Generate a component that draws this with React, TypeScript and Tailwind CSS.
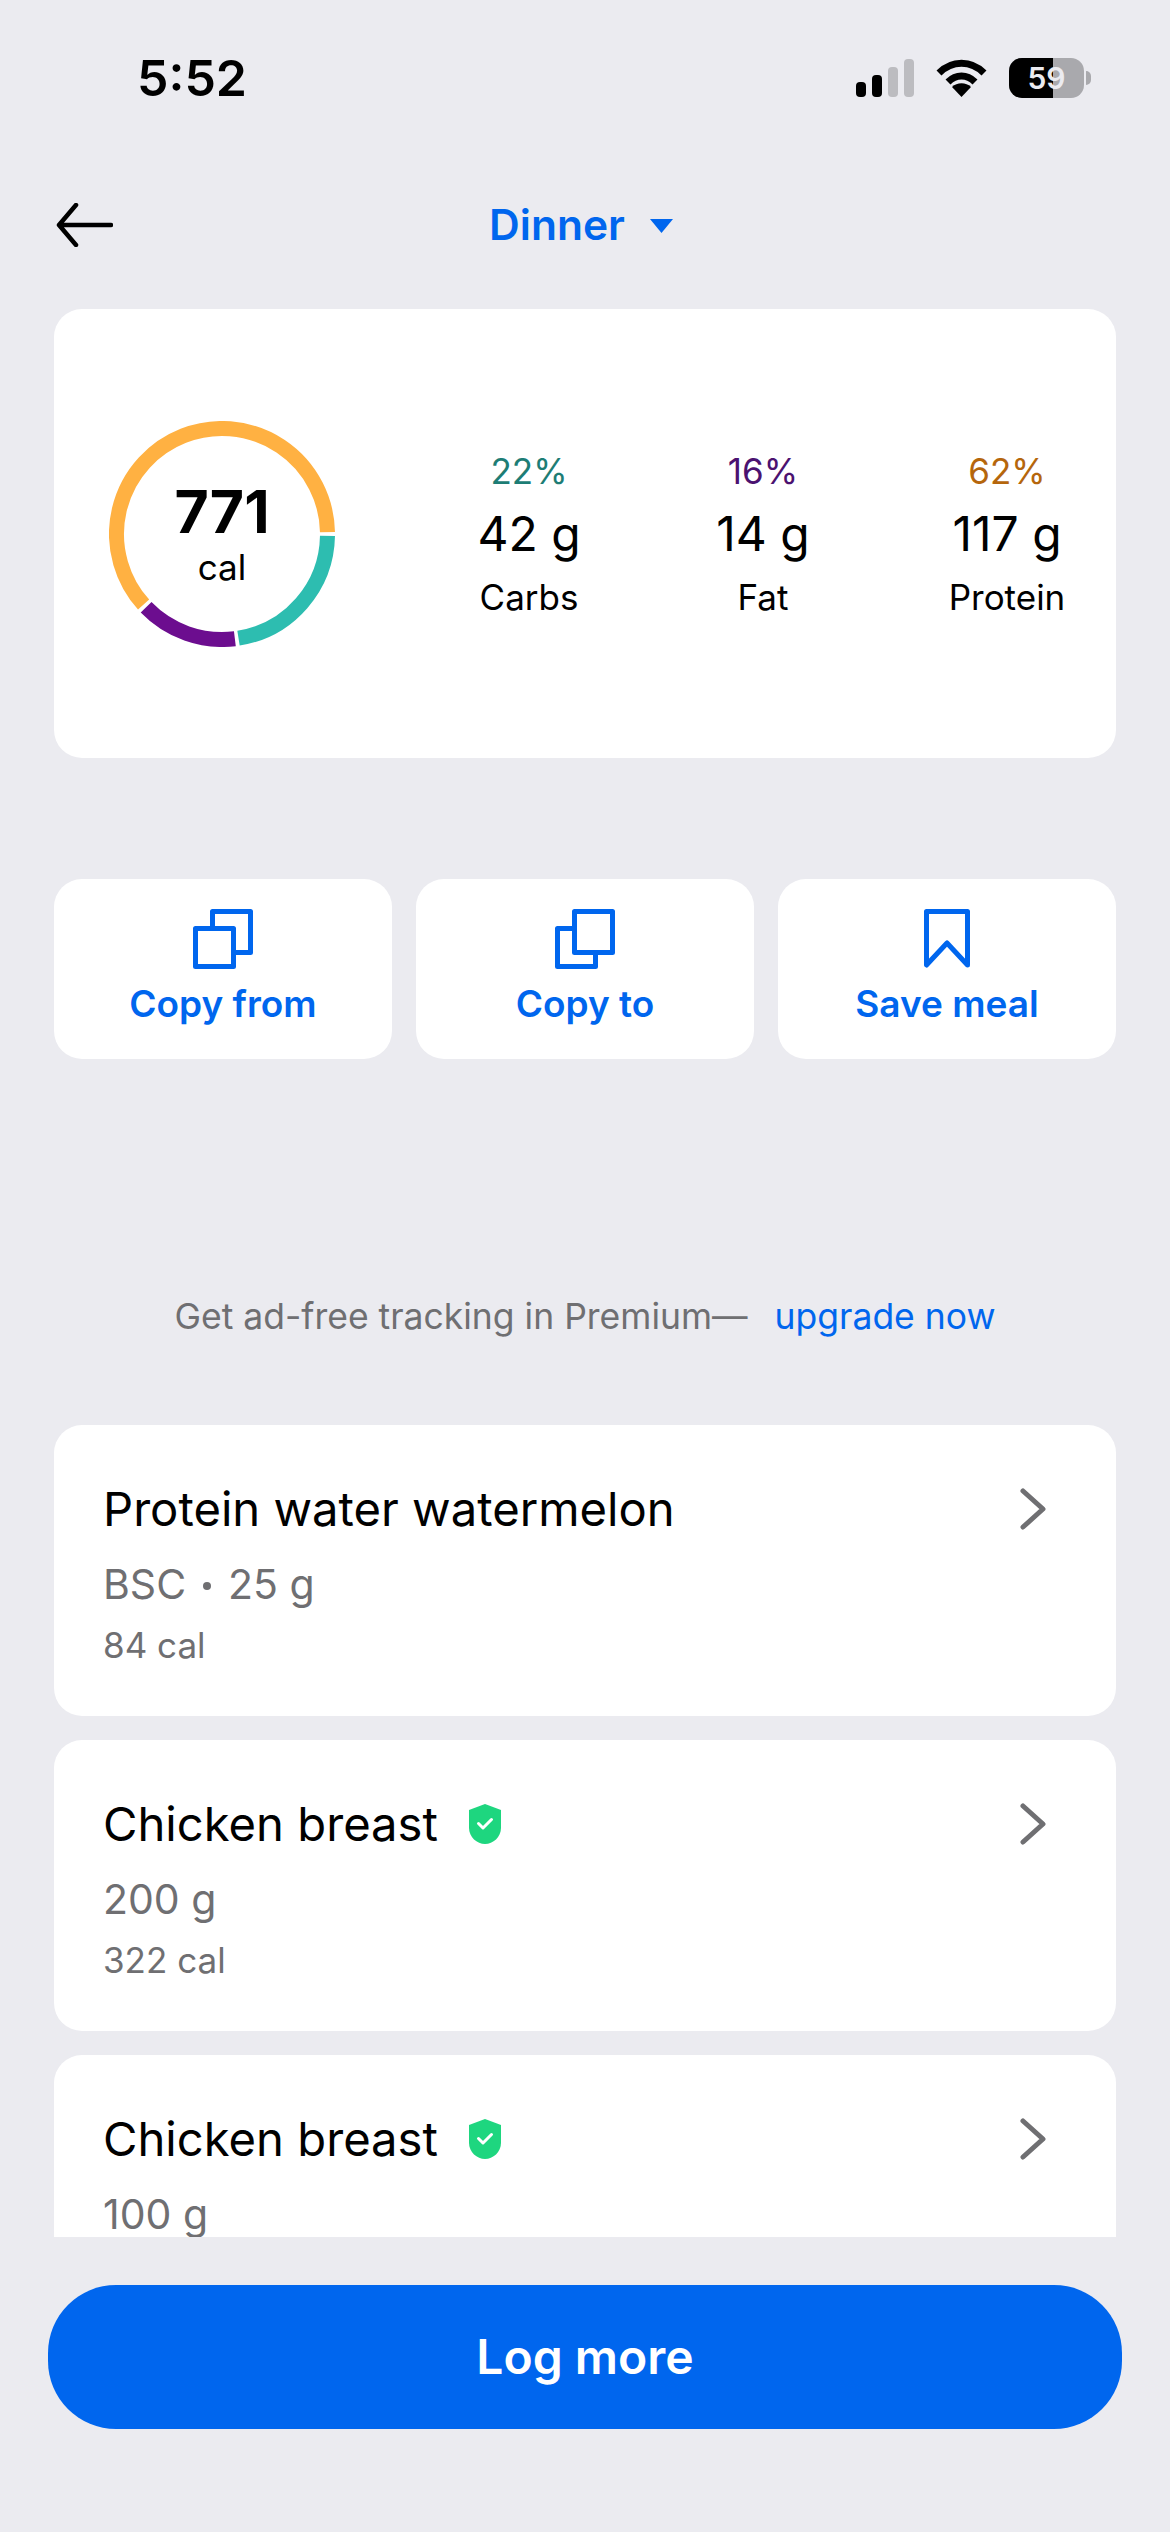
const FONT = "font-['Inter','Noto_Sans',sans-serif]"

type Macro = { pct: string; grams: string; label: string; color: string; width: string }

const macros: Macro[] = [
  { pct: '22%', grams: '42 g', label: 'Carbs', color: 'text-[#1d7d75]', width: 'w-[100px]' },
  { pct: '16%', grams: '14 g', label: 'Fat', color: 'text-[#4b1270]', width: 'w-[100px]' },
  { pct: '62%', grams: '117 g', label: 'Protein', color: 'text-[#b5660c]', width: 'w-[120px]' },
]

type Food = { name: string; verified?: boolean; brand?: string; amount: string; cal?: string }

const foods: Food[] = [
  { name: 'Protein water watermelon', brand: 'BSC', amount: '25 g', cal: '84 cal' },
  { name: 'Chicken breast', verified: true, amount: '200 g', cal: '322 cal' },
  { name: 'Chicken breast', verified: true, amount: '100 g' },
]

function arc(from: number, to: number) {
  const r = 105.5
  const c = 113
  const p = (deg: number) => {
    const a = (deg * Math.PI) / 180
    return `${(c + r * Math.cos(a)).toFixed(2)} ${(c + r * Math.sin(a)).toFixed(2)}`
  }
  return `M${p(from)} A${r} ${r} 0 ${to - from > 180 ? 1 : 0} 1 ${p(to)}`
}

function Ring() {
  return (
    <div className="relative h-[226px] w-[226px] shrink-0">
      <svg width="226" height="226" viewBox="0 0 226 226" fill="none" strokeWidth="15">
        <path d={arc(1, 81)} stroke="#2dbdb0" />
        <path d={arc(83, 136)} stroke="#6c0d8f" />
        <path d={arc(138, 359)} stroke="#ffb142" />
      </svg>
      <div className="absolute inset-0 flex flex-col items-center justify-center">
        <span className="text-[59px] leading-[66px] font-bold text-black">771</span>
        <span className="text-[35px] leading-[44px] text-black">cal</span>
      </div>
    </div>
  )
}

function StatusBar() {
  return (
    <div className="flex h-[40px] items-center justify-between pr-[79px] pl-[137px]">
      <span className="text-[50px] leading-none font-semibold text-black">5:52</span>
      <div className="flex items-center">
        <svg width="58" height="38" viewBox="0 0 58 38">
          <rect x="0" y="23" width="10" height="15" rx="4" fill="#000" />
          <rect x="16" y="16" width="10" height="22" rx="4" fill="#000" />
          <rect x="32" y="8" width="10" height="30" rx="4" fill="#bcbcc0" />
          <rect x="48" y="0" width="10" height="38" rx="4" fill="#bcbcc0" />
        </svg>
        <svg className="ml-[22px]" width="51" height="38" viewBox="0 0 51 38" fill="none" stroke="#000" strokeWidth="7">
          <path d="M3 14 C16 1 35 1 48 14" />
          <path d="M12 23 C20 15 31 15 39 23" />
          <path d="M25.5 38 L16 28 C21 23 30 23 35 28 Z" fill="#000" stroke="none" />
        </svg>
        <div className="relative ml-[22px] flex h-[40px] w-[75px] items-center justify-center overflow-hidden rounded-[13px] bg-[#a9a9ad]">
          <div className="absolute inset-y-0 left-0 w-[44px] bg-black" />
          <span className="relative text-[30px] leading-none font-semibold text-[#ebebf0]">59</span>
        </div>
        <div className="ml-[2px] h-[14px] w-[5px] rounded-r-full bg-[#a9a9ad]" />
      </div>
    </div>
  )
}

function NavBar() {
  return (
    <div className="relative mt-[97px] flex h-[60px] items-center justify-center">
      <svg className="absolute left-[56px]" width="57" height="44" viewBox="0 0 57 44" fill="none" stroke="#000" strokeWidth="4.5" strokeLinecap="round" strokeLinejoin="round">
        <path d="M55 22 H3 M20 2 L3 22 L20 42" />
      </svg>
      <div className="ml-[-7px] flex items-center gap-[24px]">
        <span className="text-[42.5px] leading-none font-semibold text-[#0066ee]">Dinner</span>
        <svg width="25" height="15" viewBox="0 0 25 15">
          <path d="M1 1 H24 L12.5 15 Z" fill="#0066ee" />
        </svg>
      </div>
    </div>
  )
}

function CopyFromIcon() {
  return (
    <svg width="60" height="60" viewBox="0 0 60 60" fill="none" stroke="#0066ee" strokeWidth="5" strokeLinejoin="round">
      <path d="M19.5 17 V2.5 H57.5 V43.5 H43" />
      <rect x="2.5" y="19.5" width="38" height="38" />
    </svg>
  )
}

function CopyToIcon() {
  return (
    <svg width="60" height="60" viewBox="0 0 60 60" fill="none" stroke="#0066ee" strokeWidth="5" strokeLinejoin="round">
      <path d="M17 19.5 H2.5 V57.5 H40.5 V43" />
      <rect x="19.5" y="2.5" width="38" height="41" />
    </svg>
  )
}

function BookmarkIcon() {
  return (
    <svg width="46" height="60" viewBox="0 0 46 60" fill="none" stroke="#0066ee" strokeWidth="5" strokeLinejoin="round">
      <path d="M2.5 2.5 H43.5 V56 L23 34 L2.5 56 Z" />
    </svg>
  )
}

function ActionCard({ icon, label }: { icon: React.ReactNode; label: string }) {
  return (
    <div className="flex h-[180px] flex-col items-center rounded-[28px] bg-white pt-[30px]">
      {icon}
      <span className="mt-[13px] text-[37px] leading-[44px] font-semibold text-[#0066ee]">{label}</span>
    </div>
  )
}

function ShieldIcon() {
  return (
    <svg className="ml-[30px]" width="34" height="40" viewBox="0 0 34 40">
      <path d="M17 0 L33 6 V24 C33 33 25 40 17 40 C9 40 1 33 1 24 V6 Z" fill="#1ed67f" />
      <path d="M10.5 19.5 L15 24 L23.5 15.5" fill="none" stroke="#fff" strokeWidth="3" strokeLinecap="round" strokeLinejoin="round" />
    </svg>
  )
}

function FoodCard({ food }: { food: Food }) {
  return (
    <div className="flex h-[291px] shrink-0 items-start justify-between rounded-[28px] bg-white pt-[54px] pr-[70px] pl-[49px]">
      <div>
        <div className="flex h-[60px] items-center">
          <span className="text-[47.2px] leading-none text-black">{food.name}</span>
          {food.verified && <ShieldIcon />}
        </div>
        <div className="mt-[15px] flex items-center text-[41px] leading-[60px] text-[#6f6f72]">
          {food.brand && (
            <>
              {food.brand}
              <span className="mx-[17px] mt-[4px] h-[8px] w-[8px] rounded-full bg-[#6f6f72]" />
            </>
          )}
          {food.amount}
        </div>
        {food.cal && <div className="mt-[7px] text-[35px] leading-[48px] text-[#6f6f72]">{food.cal}</div>}
      </div>
      <svg className="mt-[9px]" width="26" height="42" viewBox="0 0 26 42" fill="none" stroke="#6f6f72" strokeWidth="5" strokeLinecap="round" strokeLinejoin="round">
        <path d="M3 3 L23 21 L3 39" />
      </svg>
    </div>
  )
}

export default function App() {
  return (
    <div className={`flex h-[2532px] w-[1170px] flex-col overflow-hidden bg-[#ebebf0] pt-[58px] ${FONT}`}>
      <StatusBar />
      <NavBar />

      <div className="mx-[54px] mt-[54px] flex h-[449px] shrink-0 items-center rounded-[28px] bg-white pr-[49px] pl-[55px]">
        <Ring />
        <div className="ml-auto flex items-center gap-[134px]">
          {macros.map((m) => (
            <div key={m.label} className={`flex flex-col items-center whitespace-nowrap ${m.width}`}>
              <span className={`text-[35px] leading-[44px] ${m.color}`}>{m.pct}</span>
              <span className="mt-[13px] text-[48px] leading-[56px] text-black">{m.grams}</span>
              <span className="mt-[13px] text-[35px] leading-[44px] text-black">{m.label}</span>
            </div>
          ))}
        </div>
      </div>

      <div className="mx-[54px] mt-[121px] grid shrink-0 grid-cols-3 gap-[24px]">
        <ActionCard icon={<CopyFromIcon />} label="Copy from" />
        <ActionCard icon={<CopyToIcon />} label="Copy to" />
        <ActionCard icon={<BookmarkIcon />} label="Save meal" />
      </div>

      <div className="mt-[233px] flex h-[50px] shrink-0 items-center justify-center gap-[27px] text-[35.5px] leading-none">
        <span className="text-[#6f6f72]">Get ad-free tracking in Premium—</span>
        <span className="text-[#0066ee]">upgrade now</span>
      </div>

      <div className="mx-[54px] mt-[83px] flex h-[812px] shrink-0 flex-col gap-[24px] overflow-hidden">
        {foods.map((f, i) => (
          <FoodCard key={i} food={f} />
        ))}
      </div>

      <div className="mx-[48px] mt-[48px] flex h-[144px] shrink-0 items-center justify-center rounded-[68px] bg-[#0066ee]">
        <span className="text-[48px] leading-none font-semibold text-white">Log more</span>
      </div>
    </div>
  )
}
